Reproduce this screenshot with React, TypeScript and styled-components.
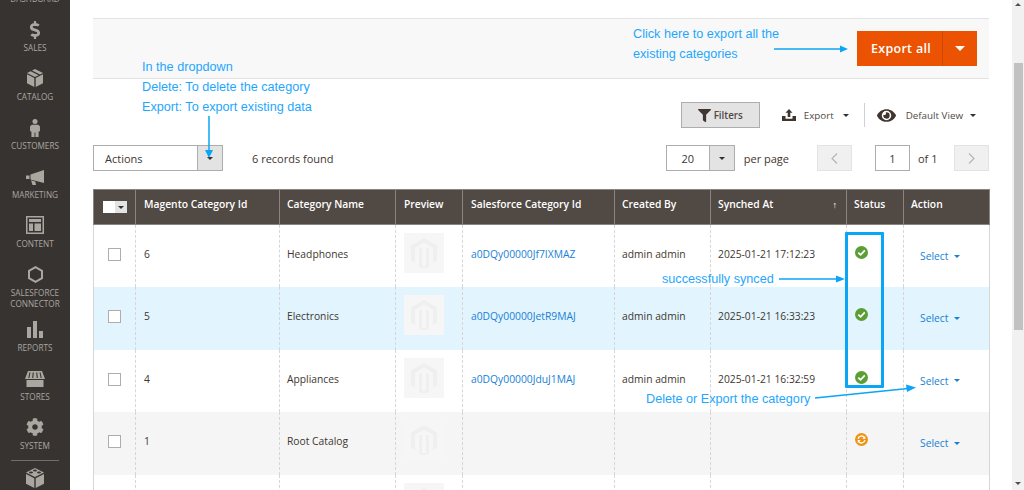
import React from "react";
import styled, { createGlobalStyle } from "styled-components";
import { FaCog, FaDollarSign, FaEye, FaFilter } from "react-icons/fa";

const GlobalStyle = createGlobalStyle`
  html, body {
    margin: 0;
    height: 100%;
    overflow: hidden;
    background: #fff;
  }
  #root {
    height: 100%;
  }
  * {
    box-sizing: border-box;
  }
`;

const Page = styled.div`
  display: flex;
  width: 1024px;
  height: 490px;
  overflow: hidden;
  font-family: "Open Sans", sans-serif;
  color: #41362f;
`;

/* sidebar */
const Sidebar = styled.nav`
  width: 70px;
  flex: none;
  background: #373330;
  overflow: hidden;
  color: #aaa6a0;
`;

const NavList = styled.div`
  margin-top: -38px;
  display: flex;
  flex-direction: column;
`;

const NavItem = styled.div<{ $h?: number; $gap?: number }>`
  height: ${(p) => p.$h ?? 49}px;
  padding-bottom: 7px;
  display: flex;
  flex-direction: column;
  align-items: center;
  justify-content: flex-end;
  gap: ${(p) => p.$gap ?? 4}px;
  flex: none;
`;

const NavLabel = styled.div`
  font-size: 8.2px;
  line-height: 11px;
  text-align: center;
  white-space: pre-line;
`;

const NavDivider = styled.div`
  height: 1px;
  margin: 2px 11px 7px;
  background: #736d68;
`;

const NavBox = styled.div`
  display: flex;
  justify-content: center;
`;

const CatalogIcon = () => (
  <svg width="16" height="18" viewBox="0 0 16 18" fill="#aaa6a0">
    <path d="M8 0 16 4 13 5.6 5 1.5ZM3.6 2.2 11.6 6.3 8 8 0 4Z" />
    <path d="M0 5.2 7.3 9V18L0 14.2ZM16 5.2V14.2L8.7 18V9Z" />
  </svg>
);

const PersonIcon = () => (
  <svg width="10" height="18" viewBox="0 0 11 20" fill="#aaa6a0">
    <circle cx="5.5" cy="2.8" r="2.8" />
    <path d="M2 6.400H9L11 8V13.500L9.500 14V20H6V15H5V20H1.500V14L0 13.500V8Z" />
  </svg>
);

const BullhornIcon = () => (
  <svg width="18" height="15" viewBox="0 0 18 15" fill="#aaa6a0">
    <path d="M0 5.500H3.500V9H0Z" />
    <path d="M4.500 4.500 18 0V13L4.500 9.500Z" />
    <path d="M5 10.300 9.300 11.500 10 15H6.500Z" />
  </svg>
);

const ContentIcon = () => (
  <svg width="18" height="18" viewBox="0 0 18 18" fill="#aaa6a0">
    <path d="M0 0H18V18H0ZM1.500 1.500V16.500H16.500V1.500Z" fillRule="evenodd" />
    <path d="M3 3H15V6H3ZM3 7.500H7V15H3ZM8.500 7.500H15V15H8.500Z" />
  </svg>
);

const HexIcon = () => (
  <svg width="15" height="17" viewBox="0 0 15 17" fill="none" stroke="#aaa6a0" strokeWidth="2">
    <path d="M7.500 1.200 14 4.800V12.200L7.500 15.800 1 12.200V4.800Z" />
  </svg>
);

const BarsIcon = () => (
  <svg width="16" height="17" viewBox="0 0 16 17" fill="#aaa6a0">
    <path d="M0 6H4V17H0ZM6 0H10V17H6ZM12 10H16V17H12Z" />
  </svg>
);

const StoreIcon = () => (
  <svg width="20" height="16" viewBox="0 0 20 16" fill="#aaa6a0">
    <path d="M3 0H17L20 8H0Z" />
    <path d="M5 1.500 3.800 7M8.300 1.500 7.700 7M11.700 1.500 12.300 7M15 1.500 16.200 7" stroke="#373330" strokeWidth="1.100" />
    <path d="M1.500 9H18.500V16H1.500Z" />
  </svg>
);

const BricksIcon = () => (
  <svg width="18" height="20" viewBox="0 0 18 20" fill="#aaa6a0">
    <path d="M9 0 18 4.500 9 9 0 4.500Z" />
    <path d="M0 6 8.300 10.200V20L0 15.800ZM18 6V15.800L9.700 20V10.200Z" />
    <ellipse cx="9" cy="2.600" rx="2" ry="1" fill="#373330" />
    <ellipse cx="5" cy="4.600" rx="2" ry="1" fill="#373330" />
    <ellipse cx="13" cy="4.600" rx="2" ry="1" fill="#373330" />
  </svg>
);

/* content */
const Main = styled.main`
  position: relative;
  flex: 1;
  min-width: 0;
  padding: 18px 23px 0;
  overflow: hidden;
`;

const ActionsPanel = styled.div`
  height: 61px;
  padding-right: 12px;
  display: flex;
  align-items: center;
  justify-content: flex-end;
  background: #f8f8f8;
  border-top: 1px solid #e3e3e3;
  border-bottom: 1px solid #e3e3e3;
`;

const SplitButton = styled.div`
  display: flex;
  height: 35px;
  background: #eb5202;
  color: #fff;
`;

const SplitLabel = styled.div`
  width: 86px;
  padding-left: 3px;
  display: flex;
  align-items: center;
  justify-content: center;
  font-size: 12.500px;
  font-weight: 600;
  letter-spacing: 0.3px;
  border-right: 1px solid #ca4a06;
`;

const SplitToggle = styled.div`
  width: 34px;
  display: flex;
  align-items: center;
  justify-content: center;
`;

const Caret = styled.span<{ $size?: number; $color?: string }>`
  display: inline-block;
  border-style: solid;
  border-width: ${(p) => p.$size ?? 4}px ${(p) => p.$size ?? 4}px 0;
  border-color: ${(p) => p.$color ?? "#303030"} transparent transparent;
`;

const ToolRow = styled.div`
  margin-top: 23px;
  height: 26px;
  display: flex;
  align-items: center;
  justify-content: flex-end;
  padding-right: 13px;
  font-size: 9.800px;
`;

const FilterButton = styled.div`
  width: 79px;
  height: 26px;
  margin-right: 22px;
  display: flex;
  align-items: center;
  justify-content: center;
  gap: 3px;
  background: #e3e3e3;
  border: 1px solid #adadad;
  font-weight: 600;
  color: #514943;
`;

const ToolItem = styled.div`
  display: flex;
  align-items: center;
  color: #514943;
`;

const ToolText = styled.span<{ $l: number; $r: number }>`
  margin: 0 ${(p) => p.$r}px 0 ${(p) => p.$l}px;
`;

const ToolDivider = styled.div`
  width: 1px;
  height: 24px;
  margin: 0 12px 0 15px;
  background: #d1d1d1;
`;

const PagerRow = styled.div`
  margin-top: 17px;
  height: 26px;
  display: flex;
  align-items: center;
  font-size: 11px;
`;

const SelectBox = styled.div<{ $w: number }>`
  width: ${(p) => p.$w}px;
  height: 26px;
  display: flex;
  align-items: stretch;
  border: 1px solid #adadad;
  background: #fff;
`;

const SelectValue = styled.div<{ $center?: boolean }>`
  flex: 1;
  display: flex;
  align-items: center;
  justify-content: ${(p) => (p.$center ? "center" : "flex-start")};
  padding-left: ${(p) => (p.$center ? 0 : 11)}px;
`;

const SelectArrow = styled.div`
  width: 25px;
  display: flex;
  align-items: center;
  justify-content: center;
  background: #e3e3e3;
  border-left: 1px solid #adadad;
`;

const Records = styled.div`
  margin-left: 29px;
  flex: 1;
`;

const PerPage = styled.div`
  margin: 0 28px 0 9px;
`;

const PageButton = styled.div`
  width: 35px;
  height: 26px;
  display: flex;
  align-items: center;
  justify-content: center;
  background: #f0f0f0;
  border: 1px solid #e3e3e3;
`;

const PageInput = styled.div`
  width: 35px;
  height: 26px;
  margin-left: 23px;
  display: flex;
  align-items: center;
  justify-content: center;
  border: 1px solid #adadad;
`;

const PageOf = styled.div`
  width: 44px;
  padding-left: 8px;
`;

const GridWrap = styled.div`
  margin-top: 18px;
`;

const Table = styled.table`
  width: 896px;
  table-layout: fixed;
  border-collapse: collapse;
  font-size: 10.300px;
  border-left: 1px solid #d6d6d6;
  border-right: 1px solid #d6d6d6;
`;

const Th = styled.th<{ $w: number; $left?: number }>`
  width: ${(p) => p.$w}px;
  height: 35px;
  padding: 0 8px 0 ${(p) => p.$left ?? 7}px;
  background: #514943;
  color: #fff;
  font-size: 10.300px;
  font-weight: 600;
  text-align: left;
  border: 1px solid #8a837f;
  white-space: nowrap;
`;

const HeadInner = styled.div`
  display: flex;
  align-items: center;
  justify-content: space-between;
  padding-bottom: 6px;
`;

const SortMark = styled.span`
  font-weight: 400;
  font-size: 9px;
  margin-right: 1px;
`;

const MassSelect = styled.div`
  width: 24px;
  height: 12px;
  margin-left: 1px;
  display: flex;
  background: #fff;
`;

const MassArrow = styled.div`
  width: 12px;
  margin-left: auto;
  display: flex;
  align-items: center;
  justify-content: center;
  background: #e3e3e3;
`;

const Row = styled.tr<{ $bg?: string }>`
  height: 62.600px;
  background: ${(p) => p.$bg ?? "#fff"};
`;

const Td = styled.td<{ $top?: number; $left?: number }>`
  padding: ${(p) => p.$top ?? 22}px 8px 0 ${(p) => p.$left ?? 7}px;
  vertical-align: top;
  line-height: 14px;
  border-left: 1px dashed #d6d6d6;
  border-right: 1px dashed #d6d6d6;
  white-space: nowrap;
`;

const Checkbox = styled.div`
  width: 13px;
  height: 13px;
  margin-left: 6px;
  background: #fff;
  border: 1px solid #adadad;
`;

const Thumb = styled.div`
  width: 40px;
  height: 40px;
  display: flex;
  align-items: center;
  justify-content: center;
  background: #f6f6f6;
`;

const Link = styled.span`
  color: #1a7fd4;
`;

const SelectLink = styled.div`
  display: flex;
  align-items: center;
  gap: 6px;
  color: #1a7fd4;
`;

/* scrollbar */
const Scrollbar = styled.div`
  width: 12px;
  flex: none;
  position: relative;
  background: #f1f1f1;
  display: flex;
  flex-direction: column;
`;

const ScrollThumb = styled.div`
  margin: 63px 1px 0 2px;
  height: 267px;
  background: #c1c1c1;
`;

const ScrollArrow = styled.div<{ $down?: boolean }>`
  position: absolute;
  left: 3px;
  ${(p) => (p.$down ? "bottom: 5px;" : "top: 3px;")}
  border-style: solid;
  border-color: transparent;
  border-width: ${(p) => (p.$down ? "3px 3px 0" : "0 3px 3px")};
  ${(p) => (p.$down ? "border-top-color: #505050;" : "border-bottom-color: #505050;")}
`;

/* blue notes drawn over the page */
const Note = styled.div<{ $x: number; $y: number }>`
  position: absolute;
  left: ${(p) => p.$x}px;
  top: ${(p) => p.$y}px;
  font-family: "Liberation Sans", Arial, sans-serif;
  font-size: 12.650px;
  line-height: 20px;
  color: #1ea7fd;
  white-space: nowrap;
`;

const Overlay = styled.svg`
  position: absolute;
  left: 0;
  top: 0;
  pointer-events: none;
`;

const HighlightBox = styled.div`
  position: absolute;
  left: 775px;
  top: 232px;
  width: 39px;
  height: 156px;
  border: 3px solid #0ba5f7;
  border-radius: 1px;
`;

const Magento = () => (
  <svg width="28" height="30" viewBox="0 0 26 30" fill="#efefef">
    <path d="M13 0 26 7.500V22.500L22 24.800V9.800L13 4.600 4 9.800V24.800L0 22.500V7.500Z" />
    <path d="M11 9.500V27.300L13 28.500 15 27.300V9.500L17.800 11.100V28.900L13 30 8.200 28.900V11.100Z" />
  </svg>
);

const StatusOk = () => (
  <svg width="13" height="13" viewBox="0 0 13 13">
    <circle cx="6.500" cy="6.500" r="6.500" fill="#5b9e33" />
    <path d="M3.300 6.600 5.600 8.800 9.800 4.400" fill="none" stroke="#fff" strokeWidth="1.800" />
  </svg>
);

const StatusSync = () => (
  <svg width="13" height="13" viewBox="0 0 13 13">
    <circle cx="6.500" cy="6.500" r="6.500" fill="#ef9312" />
    <g fill="none" stroke="#fff" strokeWidth="1.300">
      <path d="M3 5.800A3.600 3.600 0 0 1 9.500 4.600" />
      <path d="M10 7.200A3.600 3.600 0 0 1 3.500 8.400" />
    </g>
    <path d="M10.300 3V6H7.400ZM2.700 10V7H5.600Z" fill="#fff" />
  </svg>
);

const ExportIcon = () => (
  <svg width="14" height="12" viewBox="0 0 14 12" fill="#41362f">
    <path d="M7 0 10.500 3.800H8.300V8H5.700V3.800H3.500Z" />
    <path d="M0 7H3.500V9.800H10.500V7H14V12H0Z" />
  </svg>
);

const Chevron = ({ left }: { left?: boolean }) => (
  <svg width="7" height="11" viewBox="0 0 7 11" fill="none" stroke="#b5b5b5" strokeWidth="1.200">
    <path d={left ? "M6 .5 1 5.500 6 10.500" : "M1 .5 6 5.500 1 10.500"} />
  </svg>
);

const columns = [
  { label: "Magento Category Id", w: 144, left: 8 },
  { label: "Category Name", w: 116 },
  { label: "Preview", w: 67, left: 8 },
  { label: "Salesforce Category Id", w: 152, left: 8 },
  { label: "Created By", w: 96 },
  { label: "Synched At", w: 136, sorted: true },
  { label: "Status", w: 57 },
  { label: "Action", w: 86 },
];

const rows = [
  { id: "6", name: "Headphones", sf: "a0DQy00000Jf7IXMAZ", by: "admin admin", at: "2025-01-21 17:12:23", ok: true },
  { id: "5", name: "Electronics", sf: "a0DQy00000JetR9MAJ", by: "admin admin", at: "2025-01-21 16:33:23", ok: true, bg: "#e2f5fe" },
  { id: "4", name: "Appliances", sf: "a0DQy00000JduJ1MAJ", by: "admin admin", at: "2025-01-21 16:32:59", ok: true },
  { id: "1", name: "Root Catalog", sf: "", by: "", at: "", ok: false, bg: "#f5f5f5" },
  { id: "", name: "", sf: "", by: "", at: "", ok: false, last: true },
];

export default function App() {
  return (
    <Page>
      <GlobalStyle />
      <Sidebar>
        <NavList>
          <NavItem>
            <NavLabel>DASHBOARD</NavLabel>
          </NavItem>
          <NavItem $gap={3}>
            <FaDollarSign size={18} />
            <NavLabel>SALES</NavLabel>
          </NavItem>
          <NavItem>
            <CatalogIcon />
            <NavLabel>CATALOG</NavLabel>
          </NavItem>
          <NavItem $gap={3}>
            <PersonIcon />
            <NavLabel>CUSTOMERS</NavLabel>
          </NavItem>
          <NavItem>
            <BullhornIcon />
            <NavLabel>MARKETING</NavLabel>
          </NavItem>
          <NavItem>
            <ContentIcon />
            <NavLabel>CONTENT</NavLabel>
          </NavItem>
          <NavItem $h={60}>
            <HexIcon />
            <NavLabel>{"SALESFORCE\nCONNECTOR"}</NavLabel>
          </NavItem>
          <NavItem $h={44}>
            <BarsIcon />
            <NavLabel>REPORTS</NavLabel>
          </NavItem>
          <NavItem $h={49}>
            <StoreIcon />
            <NavLabel>STORES</NavLabel>
          </NavItem>
          <NavItem>
            <FaCog size={18} />
            <NavLabel>SYSTEM</NavLabel>
          </NavItem>
          <NavDivider />
          <NavBox>
            <BricksIcon />
          </NavBox>
        </NavList>
      </Sidebar>

      <Main>
        <ActionsPanel>
          <SplitButton>
            <SplitLabel>Export all</SplitLabel>
            <SplitToggle>
              <Caret $size={5} $color="#fff" />
            </SplitToggle>
          </SplitButton>
        </ActionsPanel>

        <ToolRow>
          <FilterButton>
            <FaFilter size={13} color="#41362f" />
            Filters
          </FilterButton>
          <ToolItem>
            <ExportIcon />
            <ToolText $l={8} $r={9}>Export</ToolText>
            <Caret $size={3} />
          </ToolItem>
          <ToolDivider />
          <ToolItem>
            <FaEye size={19} color="#41362f" />
            <ToolText $l={10} $r={7}>Default View</ToolText>
            <Caret $size={3} />
          </ToolItem>
        </ToolRow>

        <PagerRow>
          <SelectBox $w={130}>
            <SelectValue>Actions</SelectValue>
            <SelectArrow>
              <Caret $size={3} />
            </SelectArrow>
          </SelectBox>
          <Records>6 records found</Records>
          <SelectBox $w={69}>
            <SelectValue $center>20</SelectValue>
            <SelectArrow>
              <Caret $size={3} />
            </SelectArrow>
          </SelectBox>
          <PerPage>per page</PerPage>
          <PageButton>
            <Chevron left />
          </PageButton>
          <PageInput>1</PageInput>
          <PageOf>of 1</PageOf>
          <PageButton>
            <Chevron />
          </PageButton>
        </PagerRow>

        <GridWrap>
          <Table>
            <thead>
              <tr>
                <Th $w={42} $left={8}>
                  <MassSelect>
                    <MassArrow>
                      <Caret $size={3} />
                    </MassArrow>
                  </MassSelect>
                </Th>
                {columns.map((c) => (
                  <Th key={c.label} $w={c.w} $left={c.left}>
                    <HeadInner>
                      {c.label}
                      {c.sorted && <SortMark>↑</SortMark>}
                    </HeadInner>
                  </Th>
                ))}
              </tr>
            </thead>
            <tbody>
              {rows.map((r, i) => (
                <Row key={i} $bg={r.bg}>
                  <Td $top={23} $left={8}>{!r.last && <Checkbox />}</Td>
                  <Td $left={8}>{r.id}</Td>
                  <Td>{r.name}</Td>
                  <Td $top={8} $left={8}>
                    <Thumb>
                      <Magento />
                    </Thumb>
                  </Td>
                  <Td $left={8}>
                    <Link>{r.sf}</Link>
                  </Td>
                  <Td>{r.by}</Td>
                  <Td>{r.at}</Td>
                  <Td $top={21} $left={8}>{!r.last && (r.ok ? <StatusOk /> : <StatusSync />)}</Td>
                  <Td $top={24} $left={16}>
                    {!r.last && (
                      <SelectLink>
                        Select
                        <Caret $size={3} $color="#1a7fd4" />
                      </SelectLink>
                    )}
                  </Td>
                </Row>
              ))}
            </tbody>
          </Table>
        </GridWrap>

        <Note $x={72} $y={57}>
          In the dropdown
          <br />
          Delete: To delete the category
          <br />
          Export: To export existing data
        </Note>
        <Note $x={563} $y={24}>
          Click here to export all the
          <br />
          existing categories
        </Note>
        <Note $x={592} $y={269}>successfully synced</Note>
        <Note $x={576} $y={389}>Delete or Export the category</Note>
        <HighlightBox />
        <Overlay width="942" height="490" fill="#0ba5f7" stroke="#0ba5f7">
          <path d="M139 116V152" strokeWidth="1.500" />
          <path d="M135 150H143L139 158Z" strokeWidth="0" />
          <path d="M704 49H772" strokeWidth="1.500" />
          <path d="M770 45.500 778 49 770 52.500Z" strokeWidth="0" />
          <path d="M709 279H768" strokeWidth="1.500" />
          <path d="M766 275.500 775 279 766 282.500Z" strokeWidth="0" />
          <path d="M745 398 838 388.500" strokeWidth="1.500" />
          <path d="M836 384.500 846 387.500 837 392Z" strokeWidth="0" />
        </Overlay>
      </Main>

      <Scrollbar>
        <ScrollArrow />
        <ScrollThumb />
        <ScrollArrow $down />
      </Scrollbar>
    </Page>
  );
}
